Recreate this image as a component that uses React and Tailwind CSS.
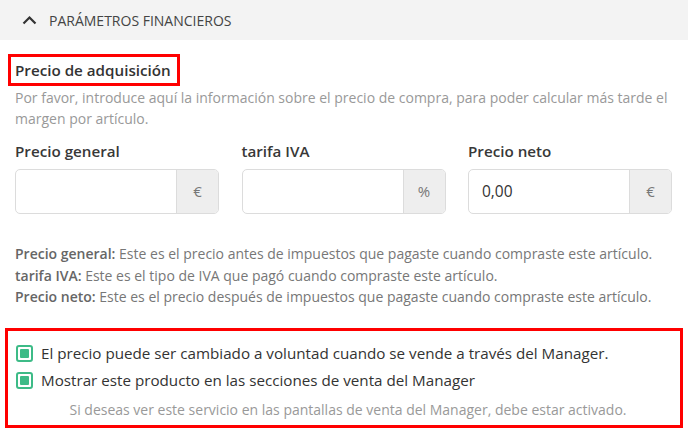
import React from "react";

function Field({ label, unit, value }) {
  return (
    <div className="flex flex-col w-[204px]">
      <div className="text-[15.2px] leading-[24px] font-semibold text-[#383838] mb-[6px]">{label}</div>
      <div className="flex h-[45px] border border-[#dcdcdc] rounded-[5px] overflow-hidden bg-white">
        <div className="flex-1 flex items-center px-[13px] text-[15.5px] text-[#333]">{value}</div>
        <div className="w-[42px] flex items-center justify-center bg-[#eeeeee] border-l border-[#dcdcdc] text-[15px] text-[#777]">
          {unit}
        </div>
      </div>
    </div>
  );
}

function Check({ children }) {
  return (
    <div className="flex items-center h-[27px]">
      <div className="w-[17px] h-[17px] border-2 border-[#3dbb87] rounded-[3px] p-[2px] bg-white mr-[8px]">
        <div className="w-full h-full bg-[#3dbb87] rounded-[1px]"></div>
      </div>
      <span className="text-[15.2px] text-[#333]">{children}</span>
    </div>
  );
}

export default function App() {
  return (
    <div className="w-[688px] h-[445px] bg-white overflow-hidden" style={{ fontFamily: '"Open Sans", sans-serif' }}>
      <div className="h-[40px] bg-[#f3f3f3] flex items-center pl-[22px]">
        <svg width="15" height="10" viewBox="0 0 15 10" className="mr-[12px]">
          <polyline points="1.5,8.5 7.5,2.5 13.5,8.5" fill="none" stroke="#333" strokeWidth="2.2" />
        </svg>
        <span className="text-[14px] text-[#444]">PARÁMETROS FINANCIEROS</span>
      </div>
      <div className="px-[15px]">
        <div className="mt-[14px] -ml-[7px] inline-flex border-[3px] border-[#ff0000] px-[4px] pr-[6px] h-[32px] items-center">
          <span className="text-[15.2px] font-semibold text-[#333]">Precio de adquisición</span>
        </div>
        <p className="text-[14px] leading-[21px] text-[#999] mt-[1px]">
          Por favor, introduce aquí la información sobre el precio de compra, para poder calcular más tarde el margen por artículo.
        </p>
        <div className="flex gap-[22.5px] mt-[10px]">
          <Field label="Precio general" unit="€" value="" />
          <Field label="tarifa IVA" unit="%" value="" />
          <Field label="Precio neto" unit="€" value="0,00" />
        </div>
        <div className="mt-[29px] text-[14px] leading-[21.5px] text-[#777]">
          <div><span className="font-semibold text-[#666]">Precio general:</span> Este es el precio antes de impuestos que pagaste cuando compraste este artículo.</div>
          <div><span className="font-semibold text-[#666]">tarifa IVA:</span> Este es el tipo de IVA que pagó cuando compraste este artículo.</div>
          <div><span className="font-semibold text-[#666]">Precio neto:</span> Este es el precio después de impuestos que pagaste cuando compraste este artículo.</div>
        </div>
      </div>
      <div className="mx-[5px] mt-[20px] border-[3px] border-[#ff0000] pt-[9px] pb-[4px] pl-[8px] pr-[8px]">
        <Check>El precio puede ser cambiado a voluntad cuando se vende a través del Manager.</Check>
        <Check>Mostrar este producto en las secciones de venta del Manager</Check>
        <div className="text-center text-[14px] leading-[22px] text-[#999] mt-[5px] pl-[8px]">
          Si deseas ver este servicio en las pantallas de venta del Manager, debe estar activado.
        </div>
      </div>
    </div>
  );
}
